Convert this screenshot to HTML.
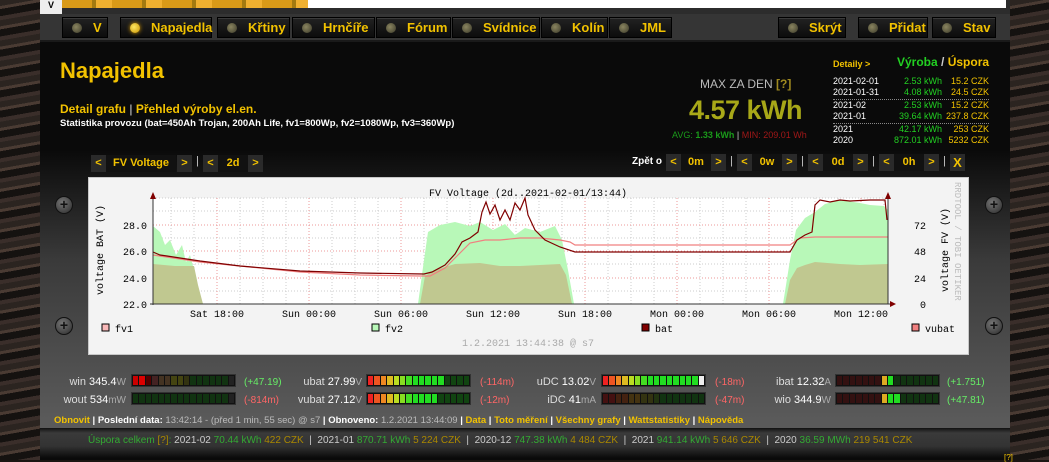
<!DOCTYPE html>
<html><head><meta charset="utf-8"><style>
*{margin:0;padding:0;box-sizing:border-box}
body{width:1049px;height:460px;overflow:hidden;background:#1a1512;font-family:"Liberation Sans",Arial,sans-serif;position:relative}
.abs{position:absolute}
.side{position:absolute;top:0;height:460px;background:repeating-linear-gradient(170deg,#2b2420 0 6px,#4a3b33 6px 9px,#151210 9px 16px,#3a2e2a 16px 20px)}
.main{position:absolute;left:40px;top:0;width:970px;height:460px;background:linear-gradient(#0a0a0a 0px,#0a0a0a 150px,#3a3a3a 260px,#5a5a5a 420px)}
.nav{position:absolute;left:40px;top:14px;width:970px;height:28px;background:#353535;border-bottom:2px solid #1a1a1a}
.btn{position:absolute;top:17px;height:21px;background:linear-gradient(#222,#0c0c0c);border:1px solid #000;color:#f2c200;font-weight:bold;font-size:13px;line-height:19px;padding-left:30px;box-shadow:inset 0 1px 0 #3a3a3a}
.btn:before{content:"";position:absolute;left:9px;top:5px;width:10px;height:10px;border-radius:50%;background:radial-gradient(circle at 40% 40%,#8a8560,#3a3828)}
.btn.on:before{background:radial-gradient(circle at 40% 40%,#ffe860,#c89000);box-shadow:0 0 4px #e0a000}
.y{color:#f2c200}
.g{color:#22d022}
.nb{position:absolute;height:17px;background:#2a2a2a;color:#f2c200;font-weight:bold;font-size:11px;line-height:17px;text-align:center}
.screw{position:absolute;width:18px;height:18px;border-radius:50%;background:radial-gradient(circle at 40% 35%,#777,#2a2a2a);border:1px solid #111;color:#111;font-size:14px;line-height:15px;text-align:center;font-weight:bold}
.meter{position:absolute;width:105px;height:13px;background:#111;border:1px solid #333;display:flex;gap:1px;padding:1px}
.meter i{flex:1;display:block}
.ml{position:absolute;font-size:11px;color:#ddd;text-align:right}
.ml b{font-weight:normal;color:#fff}
.ml s{text-decoration:none;color:#aaa;font-size:10px}
</style></head><body>
<div class="side" style="left:0;width:40px"></div>
<div class="side" style="left:1010px;width:39px"></div>
<div class="main"></div>
<div class="abs" style="left:40px;top:0;width:970px;height:14px;background:#2c2c2c"></div>
<div class="abs" style="left:40px;top:0;width:22px;height:14px;background:#eee;font-size:9px;font-weight:bold;text-align:center;line-height:10px">V</div>
<div class="abs" style="left:62px;top:0;width:246px;height:8px;background:repeating-linear-gradient(90deg,#d99a18 0 30px,#a37a10 30px 34px,#f0b030 34px 50px)"></div>
<div class="abs" style="left:308px;top:0;width:698px;height:8px;background:#fff"></div>
<div class="nav"></div>
<div class="btn" style="left:62px;width:46px">V</div>
<div class="btn on" style="left:120px;width:92px">Napajedla</div>
<div class="btn" style="left:217px;width:73px">Křtiny</div>
<div class="btn" style="left:292px;width:83px">Hrnčíře</div>
<div class="btn" style="left:376px;width:75px">Fórum</div>
<div class="btn" style="left:452px;width:88px">Svídnice</div>
<div class="btn" style="left:541px;width:67px">Kolín</div>
<div class="btn" style="left:609px;width:63px">JML</div>
<div class="btn" style="left:778px;width:68px">Skrýt</div>
<div class="btn" style="left:858px;width:70px">Přidat</div>
<div class="btn" style="left:932px;width:64px">Stav</div>

<div class="abs y" style="left:60px;top:58px;font-size:22px;font-weight:bold">Napajedla</div>
<div class="abs y" style="left:60px;top:102px;font-size:12px;font-weight:bold">Detail grafu <span style="color:#ddd;font-weight:normal">|</span> Přehled výroby el.en.</div>
<div class="abs" style="left:60px;top:118px;font-size:9.5px;font-weight:bold;color:#fff">Statistika provozu (bat=450Ah Trojan, 200Ah Life, fv1=800Wp, fv2=1080Wp, fv3=360Wp)</div>

<div class="abs" style="left:700px;top:77px;font-size:12px;color:#bbb">MAX ZA DEN <span style="color:#a08a20;font-weight:bold">[?]</span></div>
<div class="abs" style="left:689px;top:95px;font-size:27px;font-weight:bold;color:#a8a818;letter-spacing:-0.5px">4.57 kWh</div>
<div class="abs" style="left:672px;top:130px;font-size:9px;color:#1a9a1a">AVG: <b>1.33 kWh</b> <span style="color:#ccc">|</span> <span style="color:#a01818">MIN: 209.01 Wh</span></div>

<div class="abs y" style="left:833px;top:59px;font-size:9px;font-weight:bold">Detaily &gt;</div>
<div class="abs" style="left:897px;top:55px;font-size:12px;font-weight:bold"><span class="g">Výroba</span> <span style="color:#ccc">/</span> <span class="y">Úspora</span></div>
<div class="abs" style="left:833px;top:76px;font-size:9px;line-height:11px;color:#fff;width:156px">
<div style="display:flex"><span style="width:55px">2021-02-01</span><span class="g" style="width:54px;text-align:right">2.53 kWh</span><span class="y" style="flex:1;text-align:right">15.2 CZK</span></div>
<div style="display:flex;border-bottom:1px dotted #888;padding-bottom:1px"><span style="width:55px">2021-01-31</span><span class="g" style="width:54px;text-align:right">4.08 kWh</span><span class="y" style="flex:1;text-align:right">24.5 CZK</span></div>
<div style="display:flex"><span style="width:55px">2021-02</span><span class="g" style="width:54px;text-align:right">2.53 kWh</span><span class="y" style="flex:1;text-align:right">15.2 CZK</span></div>
<div style="display:flex;border-bottom:1px dotted #888;padding-bottom:1px"><span style="width:55px">2021-01</span><span class="g" style="width:54px;text-align:right">39.64 kWh</span><span class="y" style="flex:1;text-align:right">237.8 CZK</span></div>
<div style="display:flex"><span style="width:55px">2021</span><span class="g" style="width:54px;text-align:right">42.17 kWh</span><span class="y" style="flex:1;text-align:right">253 CZK</span></div>
<div style="display:flex"><span style="width:55px">2020</span><span class="g" style="width:54px;text-align:right">872.01 kWh</span><span class="y" style="flex:1;text-align:right">5232 CZK</span></div>
</div>

<div class="nb" style="left:91px;top:155px;width:15px">&lt;</div>
<div class="nb" style="left:106px;top:155px;width:70px;background:#111">FV Voltage</div>
<div class="nb" style="left:177px;top:155px;width:15px">&gt;</div>
<div class="abs" style="left:196px;top:155px;color:#ccc;font-size:11px">|</div>
<div class="nb" style="left:203px;top:155px;width:15px">&lt;</div>
<div class="nb" style="left:218px;top:155px;width:30px;background:#111">2d</div>
<div class="nb" style="left:248px;top:155px;width:15px">&gt;</div>
<div class="abs" style="left:632px;top:156px;color:#fff;font-size:10px;font-weight:bold">Zpět o</div>
<div class="nb" style="left:666px;top:154px;width:15px">&lt;</div>
<div class="nb" style="left:681px;top:154px;width:30px;background:#111">0m</div>
<div class="nb" style="left:711px;top:154px;width:15px">&gt;</div>
<div class="abs" style="left:730px;top:155px;color:#ccc;font-size:11px">|</div>
<div class="nb" style="left:737px;top:154px;width:15px">&lt;</div>
<div class="nb" style="left:752px;top:154px;width:30px;background:#111">0w</div>
<div class="nb" style="left:782px;top:154px;width:15px">&gt;</div>
<div class="abs" style="left:801px;top:155px;color:#ccc;font-size:11px">|</div>
<div class="nb" style="left:808px;top:154px;width:15px">&lt;</div>
<div class="nb" style="left:823px;top:154px;width:30px;background:#111">0d</div>
<div class="nb" style="left:853px;top:154px;width:15px">&gt;</div>
<div class="abs" style="left:872px;top:155px;color:#ccc;font-size:11px">|</div>
<div class="nb" style="left:879px;top:154px;width:15px">&lt;</div>
<div class="nb" style="left:894px;top:154px;width:30px;background:#111">0h</div>
<div class="nb" style="left:924px;top:154px;width:15px">&gt;</div>
<div class="abs" style="left:943px;top:155px;color:#ccc;font-size:11px">|</div>
<div class="nb" style="left:950px;top:154px;width:15px;font-size:13px">X</div>

<div class="screw" style="left:55px;top:196px">+</div>
<div class="screw" style="left:55px;top:317px">+</div>
<div class="screw" style="left:985px;top:196px">+</div>
<div class="screw" style="left:985px;top:317px">+</div>

<svg class="abs" style="left:88px;top:177px" width="881" height="178" viewBox="88 177 881 178" font-family="Liberation Mono, DejaVu Sans Mono, monospace">
<rect x="88" y="177" width="881" height="178" fill="#f3f3f3" stroke="#c8c8c8" stroke-width="2"/>
<rect x="153" y="198" width="735" height="106" fill="#fff"/>
<g stroke="#ccc" stroke-dasharray="1,2" stroke-width="1">
<path d="M153 211H888M153 225H888M153 238H888M153 251H888M153 264H888M153 278H888M153 291H888M153 198H888"/>
<path d="M171 198V304M194 198V304M240 198V304M263 198V304M286 198V304M332 198V304M355 198V304M378 198V304M424 198V304M447 198V304M470 198V304M516 198V304M539 198V304M562 198V304M608 198V304M631 198V304M654 198V304M700 198V304M723 198V304M746 198V304M792 198V304M815 198V304M838 198V304M884 198V304"/>
</g>
<g stroke="#e99" stroke-dasharray="1,2" stroke-width="1">
<path d="M153 225H888M153 251H888M153 278H888"/>
<path d="M217 198V304M309 198V304M401 198V304M493 198V304M585 198V304M677 198V304M769 198V304M861 198V304"/>
</g>
<path d="M153 304V226L160 232L165 245L170 240L176 255L182 245L186 262L190 255L194 270L198 290L203 304Z" fill="#b8f8b8"/>
<path d="M418 304L424 260L428 232L440 225L455 222L470 226L480 222L493 230L505 224L515 235L525 228L540 232L555 226L562 240L568 270L574 304Z" fill="#b8f8b8"/>
<path d="M783 304L790 260L796 230L805 218L815 212L825 204L840 200L860 203L870 205L884 206L888 210V304Z" fill="#b8f8b8"/>
<path d="M153 304V264L175 266L194 266L198 285L203 304Z" fill="#c0c890"/>
<path d="M420 304L425 276L435 270L455 264L480 263L500 266L520 266L540 265L560 264L566 275L572 304Z" fill="#c0c890"/>
<path d="M785 304L790 280L797 268L805 265L815 262L840 264L860 265L888 264V304Z" fill="#c0c890"/>
<path d="M153 255L180 259L200 262L240 266L300 272L360 275L420 276L430 276L445 268L458 255L470 243L485 240L500 240L520 238L540 238L560 240L570 242L575 245L600 245L700 245L790 245L800 238L815 237L840 237L888 237" fill="none" stroke="#f08080" stroke-width="1.2"/>
<path d="M153 252L160 255L167 256L180 258L200 261L240 266L300 271L360 273L424 274L432 272L445 265L455 254L462 242L470 238L478 232L482 212L486 202L490 214L495 205L500 220L505 210L510 220L515 203L520 210L525 198L528 215L535 230L545 240L560 247L575 252L600 252L700 252L790 252L797 240L805 235L812 232L815 205L820 200L830 202L840 200L850 201L870 200L885 200L887 220" fill="none" stroke="#800000" stroke-width="1.2"/>
<path d="M153 196V305M150 304H890" stroke="#333" stroke-width="1"/>
<path d="M888 196V304" stroke="#333"/>
<path d="M150 199L153 192L156 199Z M885 199L888 192L891 199Z M890 301L896 304L890 307Z" fill="#800000"/>
<g font-size="10" fill="#000">
<text x="528" y="196" text-anchor="middle">FV Voltage (2d..2021-02-01/13:44)</text>
<g text-anchor="end"><text x="147" y="229">28.0</text><text x="147" y="255">26.0</text><text x="147" y="282">24.0</text><text x="147" y="308">22.0</text></g>
<g text-anchor="end"><text x="926" y="229">72</text><text x="926" y="255">48</text><text x="926" y="282">24</text><text x="926" y="308">0</text></g>
<g text-anchor="middle"><text x="217" y="317">Sat 18:00</text><text x="309" y="317">Sun 00:00</text><text x="401" y="317">Sun 06:00</text><text x="493" y="317">Sun 12:00</text><text x="585" y="317">Sun 18:00</text><text x="677" y="317">Mon 00:00</text><text x="769" y="317">Mon 06:00</text><text x="861" y="317">Mon 12:00</text></g>
<text transform="translate(103 250) rotate(-90)" text-anchor="middle">voltage BAT (V)</text>
<text transform="translate(948 250) rotate(-90)" text-anchor="middle">voltage FV (V)</text>
<text transform="translate(955 182) rotate(90)" fill="#bbb" font-size="9">RRDTOOL / TOBI OETIKER</text>
<rect x="102" y="324" width="7" height="7" fill="#f8b8b8" stroke="#000"/><text x="115" y="332">fv1</text>
<rect x="372" y="324" width="7" height="7" fill="#b8f8b8" stroke="#000"/><text x="385" y="332">fv2</text>
<rect x="642" y="324" width="7" height="7" fill="#800000" stroke="#000"/><text x="655" y="332">bat</text>
<rect x="912" y="324" width="7" height="7" fill="#f08080" stroke="#000"/><text x="925" y="332">vubat</text>
<text x="528" y="346" text-anchor="middle" fill="#aaa">1.2.2021 13:44:38 @ s7</text>
</g>
</svg>

<div class="ml" style="left:40px;top:376px;width:86px">win <b>345.4</b><s>W</s></div>
<div class="meter" style="left:131px;top:374px"><i style="background:#c00"></i><i style="background:#d00"></i><i style="background:#500"></i><i style="background:#422"></i><i style="background:#432"></i><i style="background:#432"></i><i style="background:#441"></i><i style="background:#441"></i><i style="background:#331"></i><i style="background:#131"></i><i style="background:#131"></i><i style="background:#131"></i><i style="background:#131"></i><i style="background:#131"></i><i style="background:#131"></i><i style="background:#222"></i></div>
<div class="abs" style="left:244px;top:377px;font-size:10px;color:#6e6">(+47.19)</div>
<div class="ml" style="left:40px;top:394px;width:86px">wout <b>534</b><s>mW</s></div>
<div class="meter" style="left:131px;top:392px"><i style="background:#131"></i><i style="background:#131"></i><i style="background:#131"></i><i style="background:#131"></i><i style="background:#131"></i><i style="background:#131"></i><i style="background:#131"></i><i style="background:#131"></i><i style="background:#131"></i><i style="background:#131"></i><i style="background:#131"></i><i style="background:#131"></i><i style="background:#131"></i><i style="background:#131"></i><i style="background:#131"></i><i style="background:#222"></i></div>
<div class="abs" style="left:244px;top:395px;font-size:10px;color:#f66">(-814m)</div>

<div class="ml" style="left:280px;top:376px;width:82px">ubat <b>27.99</b><s>V</s></div>
<div class="meter" style="left:366px;top:374px"><i style="background:#e22"></i><i style="background:#e52"></i><i style="background:#e82"></i><i style="background:#db2"></i><i style="background:#bd2"></i><i style="background:#8d2"></i><i style="background:#4d2"></i><i style="background:#2d2"></i><i style="background:#2d2"></i><i style="background:#2d2"></i><i style="background:#2d2"></i><i style="background:#2d2"></i><i style="background:#141"></i><i style="background:#141"></i><i style="background:#141"></i><i style="background:#141"></i></div>
<div class="abs" style="left:480px;top:377px;font-size:10px;color:#f66">(-114m)</div>
<div class="ml" style="left:280px;top:394px;width:82px">vubat <b>27.12</b><s>V</s></div>
<div class="meter" style="left:366px;top:392px"><i style="background:#e22"></i><i style="background:#e52"></i><i style="background:#e82"></i><i style="background:#db2"></i><i style="background:#bd2"></i><i style="background:#8d2"></i><i style="background:#4d2"></i><i style="background:#2d2"></i><i style="background:#2d2"></i><i style="background:#2d2"></i><i style="background:#2d2"></i><i style="background:#141"></i><i style="background:#141"></i><i style="background:#141"></i><i style="background:#141"></i><i style="background:#141"></i></div>
<div class="abs" style="left:480px;top:395px;font-size:10px;color:#f66">(-12m)</div>

<div class="ml" style="left:510px;top:376px;width:86px">uDC <b>13.02</b><s>V</s></div>
<div class="meter" style="left:601px;top:374px"><i style="background:#e22"></i><i style="background:#e52"></i><i style="background:#e82"></i><i style="background:#db2"></i><i style="background:#bd2"></i><i style="background:#8d2"></i><i style="background:#4d2"></i><i style="background:#2d2"></i><i style="background:#2d2"></i><i style="background:#2d2"></i><i style="background:#2d2"></i><i style="background:#2d2"></i><i style="background:#2d2"></i><i style="background:#2d2"></i><i style="background:#2d2"></i><i style="background:#eee"></i></div>
<div class="abs" style="left:715px;top:377px;font-size:10px;color:#f66">(-18m)</div>
<div class="ml" style="left:510px;top:394px;width:86px">iDC <b>41</b><s>mA</s></div>
<div class="meter" style="left:601px;top:392px"><i style="background:#411"></i><i style="background:#411"></i><i style="background:#421"></i><i style="background:#421"></i><i style="background:#431"></i><i style="background:#431"></i><i style="background:#331"></i><i style="background:#331"></i><i style="background:#231"></i><i style="background:#131"></i><i style="background:#131"></i><i style="background:#131"></i><i style="background:#131"></i><i style="background:#131"></i><i style="background:#131"></i><i style="background:#131"></i></div>
<div class="abs" style="left:715px;top:395px;font-size:10px;color:#f66">(-47m)</div>

<div class="ml" style="left:740px;top:376px;width:91px">ibat <b>12.32</b><s>A</s></div>
<div class="meter" style="left:835px;top:374px"><i style="background:#311"></i><i style="background:#311"></i><i style="background:#311"></i><i style="background:#311"></i><i style="background:#311"></i><i style="background:#311"></i><i style="background:#311"></i><i style="background:#da2"></i><i style="background:#2d2"></i><i style="background:#131"></i><i style="background:#131"></i><i style="background:#131"></i><i style="background:#131"></i><i style="background:#131"></i><i style="background:#131"></i><i style="background:#131"></i></div>
<div class="abs" style="left:947px;top:377px;font-size:10px;color:#6e6">(+1.751)</div>
<div class="ml" style="left:740px;top:394px;width:91px">wio <b>344.9</b><s>W</s></div>
<div class="meter" style="left:835px;top:392px"><i style="background:#311"></i><i style="background:#311"></i><i style="background:#311"></i><i style="background:#311"></i><i style="background:#311"></i><i style="background:#311"></i><i style="background:#311"></i><i style="background:#da2"></i><i style="background:#2d2"></i><i style="background:#2d2"></i><i style="background:#131"></i><i style="background:#131"></i><i style="background:#131"></i><i style="background:#131"></i><i style="background:#131"></i><i style="background:#131"></i></div>
<div class="abs" style="left:947px;top:395px;font-size:10px;color:#6e6">(+47.81)</div>

<div class="abs" style="left:54px;top:415px;font-size:9.5px;color:#fff;font-weight:bold;white-space:nowrap"><span class="y">Obnovit</span> | Poslední data: <span style="color:#bbb;font-weight:normal">13:42:14 - (před 1 min, 55 sec) @ s7</span> | Obnoveno: <span style="color:#bbb;font-weight:normal">1.2.2021 13:44:09</span> | <span class="y">Data</span> | <span class="y">Toto měření</span> | <span class="y">Všechny grafy</span> | <span class="y">Wattstatistiky</span> | <span class="y">Nápověda</span></div>
<div class="abs" style="left:40px;top:428px;width:970px;height:32px;background:linear-gradient(#111 0,#3a3a3a 5px,#333 18px,#0a0a0a 30px)"></div>
<div class="abs" style="left:88px;top:435px;font-size:10px;color:#ccc;white-space:nowrap"><span style="color:#3a3">Úspora celkem <span style="color:#a80">[?]</span>:</span> 2021-02 <span style="color:#3a3">70.44 kWh</span> <span style="color:#a80">422 CZK</span> &nbsp;| &nbsp;2021-01 <span style="color:#3a3">870.71 kWh</span> <span style="color:#a80">5 224 CZK</span> &nbsp;| &nbsp;2020-12 <span style="color:#3a3">747.38 kWh</span> <span style="color:#a80">4 484 CZK</span> &nbsp;| &nbsp;2021 <span style="color:#3a3">941.14 kWh</span> <span style="color:#a80">5 646 CZK</span> &nbsp;| &nbsp;2020 <span style="color:#3a3">36.59 MWh</span> <span style="color:#a80">219 541 CZK</span></div>
<div class="abs y" style="left:1004px;top:453px;font-size:8px">[?]</div>
</body></html>
